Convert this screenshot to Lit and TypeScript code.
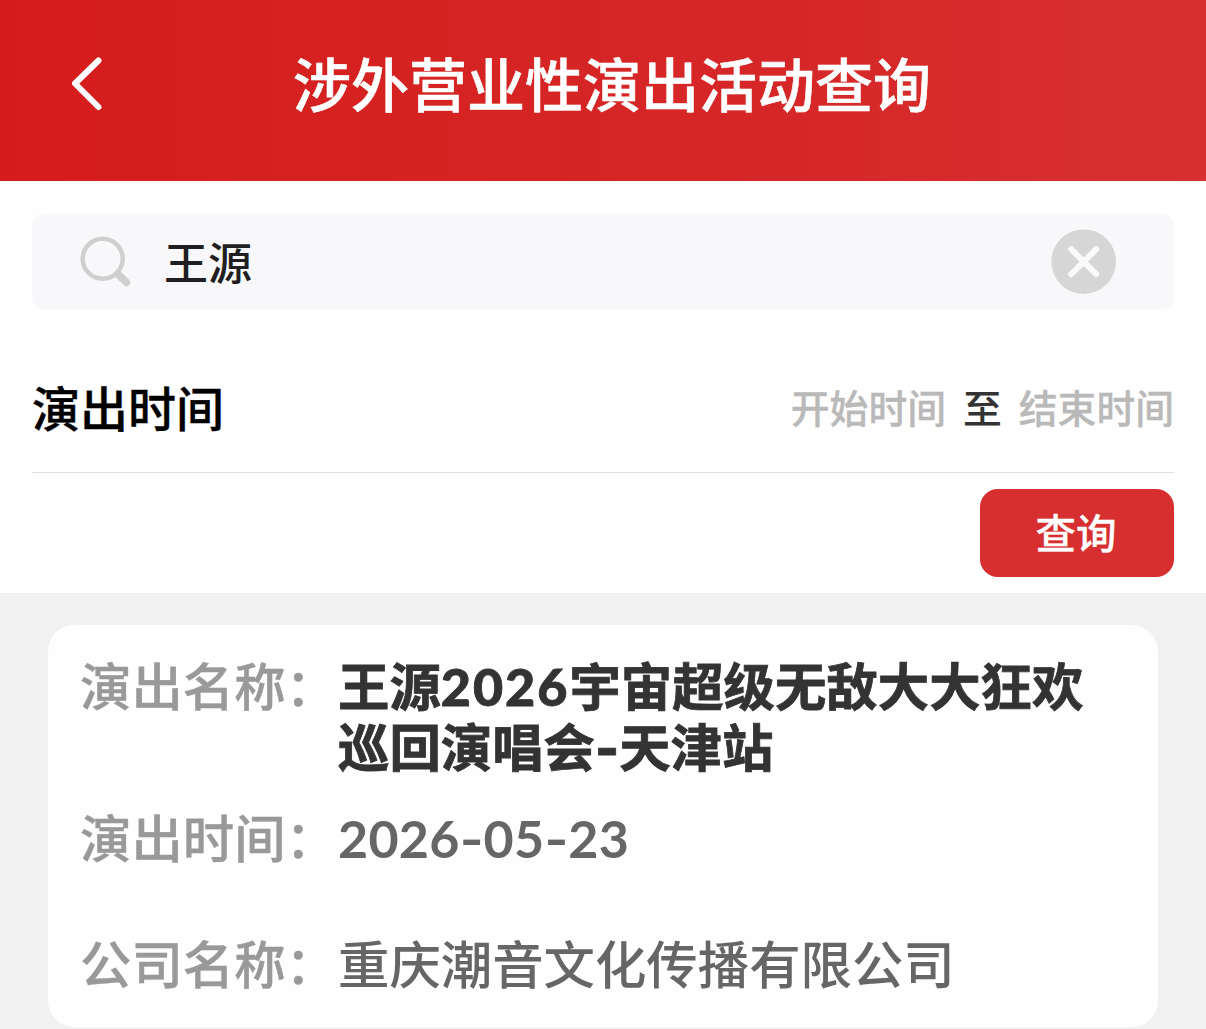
import { LitElement, html, css } from 'lit';
import { customElement, state } from 'lit/decorators.js';

@customElement('app-root')
export class AppRoot extends LitElement {
  static styles = css`
    :host {
      display: flex;
      flex-direction: column;
      height: 1029px;
      overflow: hidden;
      background-color: #f1f1f1;
      font-family: 'Noto Sans CJK SC', sans-serif;
      font-weight: 500;
    }
    header {
      display: grid;
      grid-template-columns: 174px 1fr 156px;
      align-items: center;
      box-sizing: border-box;
      height: 181px;
      padding-bottom: 16px;
      background: linear-gradient(90deg, #d41c1b 0%, #d52221 30%, #d62728 65%, #d73031 100%);
      color: #fff;
    }
    .back {
      justify-self: start;
      margin-left: 64px;
      display: block;
    }
    h1 {
      margin: 0;
      padding-bottom: 2px;
      text-align: center;
      font-size: 58px;
      line-height: 80px;
      font-weight: 500;
      white-space: nowrap;
      -webkit-text-stroke: 0.6px #fff;
    }
    .filters {
      box-sizing: border-box;
      height: 412px;
      padding: 33px 32px 0;
      background-color: #fefefe;
    }
    .search {
      display: flex;
      align-items: center;
      box-sizing: border-box;
      height: 95px;
      padding: 0 57px 0 46px;
      border-radius: 12px;
      background-color: #f8f8fa;
    }
    .search svg {
      display: block;
      flex: none;
    }
    .keyword {
      flex: 1;
      margin-left: 30px;
      padding-bottom: 2px;
      color: #1f1f21;
      font-size: 44px;
      line-height: 60px;
    }
    .period {
      display: flex;
      align-items: center;
      box-sizing: border-box;
      height: 164px;
      padding-top: 31px;
      border-bottom: 1px solid #dedede;
    }
    .period .name {
      flex: 1;
      color: #000;
      font-size: 48px;
      line-height: 60px;
      -webkit-text-stroke: 0.4px #000;
    }
    .period .date {
      color: #b9b9b9;
      font-size: 38.8px;
      line-height: 60px;
      -webkit-text-stroke: 0.3px #b9b9b9;
    }
    .period .to {
      margin: 0 17px;
      color: #333;
      font-size: 38.8px;
      line-height: 60px;
    }
    .actions {
      display: flex;
      justify-content: flex-end;
      padding-top: 16px;
    }
    button {
      width: 194px;
      height: 88px;
      padding: 0 2px 3px 0;
      border: none;
      border-radius: 18px;
      background-color: #d72e2f;
      color: #fff;
      font-family: inherit;
      font-weight: 500;
      font-size: 40.5px;
      line-height: 60px;
      -webkit-text-stroke: 0.3px #fff;
    }
    .card {
      box-sizing: border-box;
      height: 402px;
      margin: 32px 48px 0;
      padding: 29px 32px 0;
      border-radius: 26px;
      background-color: #fefefe;
      font-size: 51.4px;
      line-height: 60.5px;
    }
    .row {
      display: flex;
      white-space: nowrap;
    }
    .row + .row {
      margin-top: 31px;
    }
    .row.spaced {
      margin-top: 65px;
    }
    .label {
      width: 258px;
      color: #999;
      -webkit-text-stroke: 0.4px #999;
    }
    .value {
      color: #666;
    }
    .value.strong {
      color: #333;
      font-weight: 700;
      -webkit-text-stroke: 0.8px #333;
    }
    .num {
      font-family: Lato, 'Noto Sans CJK SC', sans-serif;
      font-size: 52px;
      font-weight: 700;
      line-height: 1;
      letter-spacing: 0.25px;
    }
    .strong .num {
      font-weight: 900;
      letter-spacing: 2px;
    }
    .dash {
      font-family: Inter, 'Noto Sans CJK SC', sans-serif;
      font-weight: 600;
      line-height: 1;
    }
    .strong .dash {
      font-weight: 800;
    }
  `;

  @state() keyword = '王源';

  render() {
    return html`
      <header>
        <svg class="back" width="46" height="60" viewBox="0 0 46 60" fill="none" stroke="#fff" stroke-width="6" stroke-linecap="round" stroke-linejoin="round">
          <path d="M34.5 7.5L11 30.5L34.5 54" />
        </svg>
        <h1>涉外营业性演出活动查询</h1>
      </header>
      <div class="filters">
        <div class="search">
          <svg width="56" height="56" viewBox="0 0 56 56" fill="none" stroke="#cfcfcf" stroke-linecap="round">
            <circle cx="24.7" cy="24.7" r="20" stroke-width="4.5" />
            <path d="M40 40.2L48.5 48.5" stroke-width="7.5" />
          </svg>
          <span class="keyword">${this.keyword}</span>
          <svg width="66" height="66" viewBox="0 0 66 66" @click="${() => (this.keyword = '')}">
            <circle cx="32.7" cy="32.7" r="32.3" fill="#d6d6d6" />
            <path d="M20.2 20.2L45.2 45.2M45.2 20.2L20.2 45.2" stroke="#fafafa" stroke-width="6" stroke-linecap="round" />
          </svg>
        </div>
        <div class="period">
          <span class="name">演出时间</span>
          <span class="date">开始时间</span>
          <span class="to">至</span>
          <span class="date">结束时间</span>
        </div>
        <div class="actions">
          <button>查询</button>
        </div>
      </div>
      <div class="card">
        <div class="row">
          <span class="label">演出名称：</span>
          <span class="value strong">王源<span class="num">2026</span>宇宙超级无敌大大狂欢<br />巡回演唱会<span class="dash">-</span>天津站</span>
        </div>
        <div class="row">
          <span class="label">演出时间：</span>
          <span class="value"><span class="num">2026</span><span class="dash">-</span><span class="num">05</span><span class="dash">-</span><span class="num">23</span></span>
        </div>
        <div class="row spaced">
          <span class="label">公司名称：</span>
          <span class="value">重庆潮音文化传播有限公司</span>
        </div>
      </div>
    `;
  }
}
